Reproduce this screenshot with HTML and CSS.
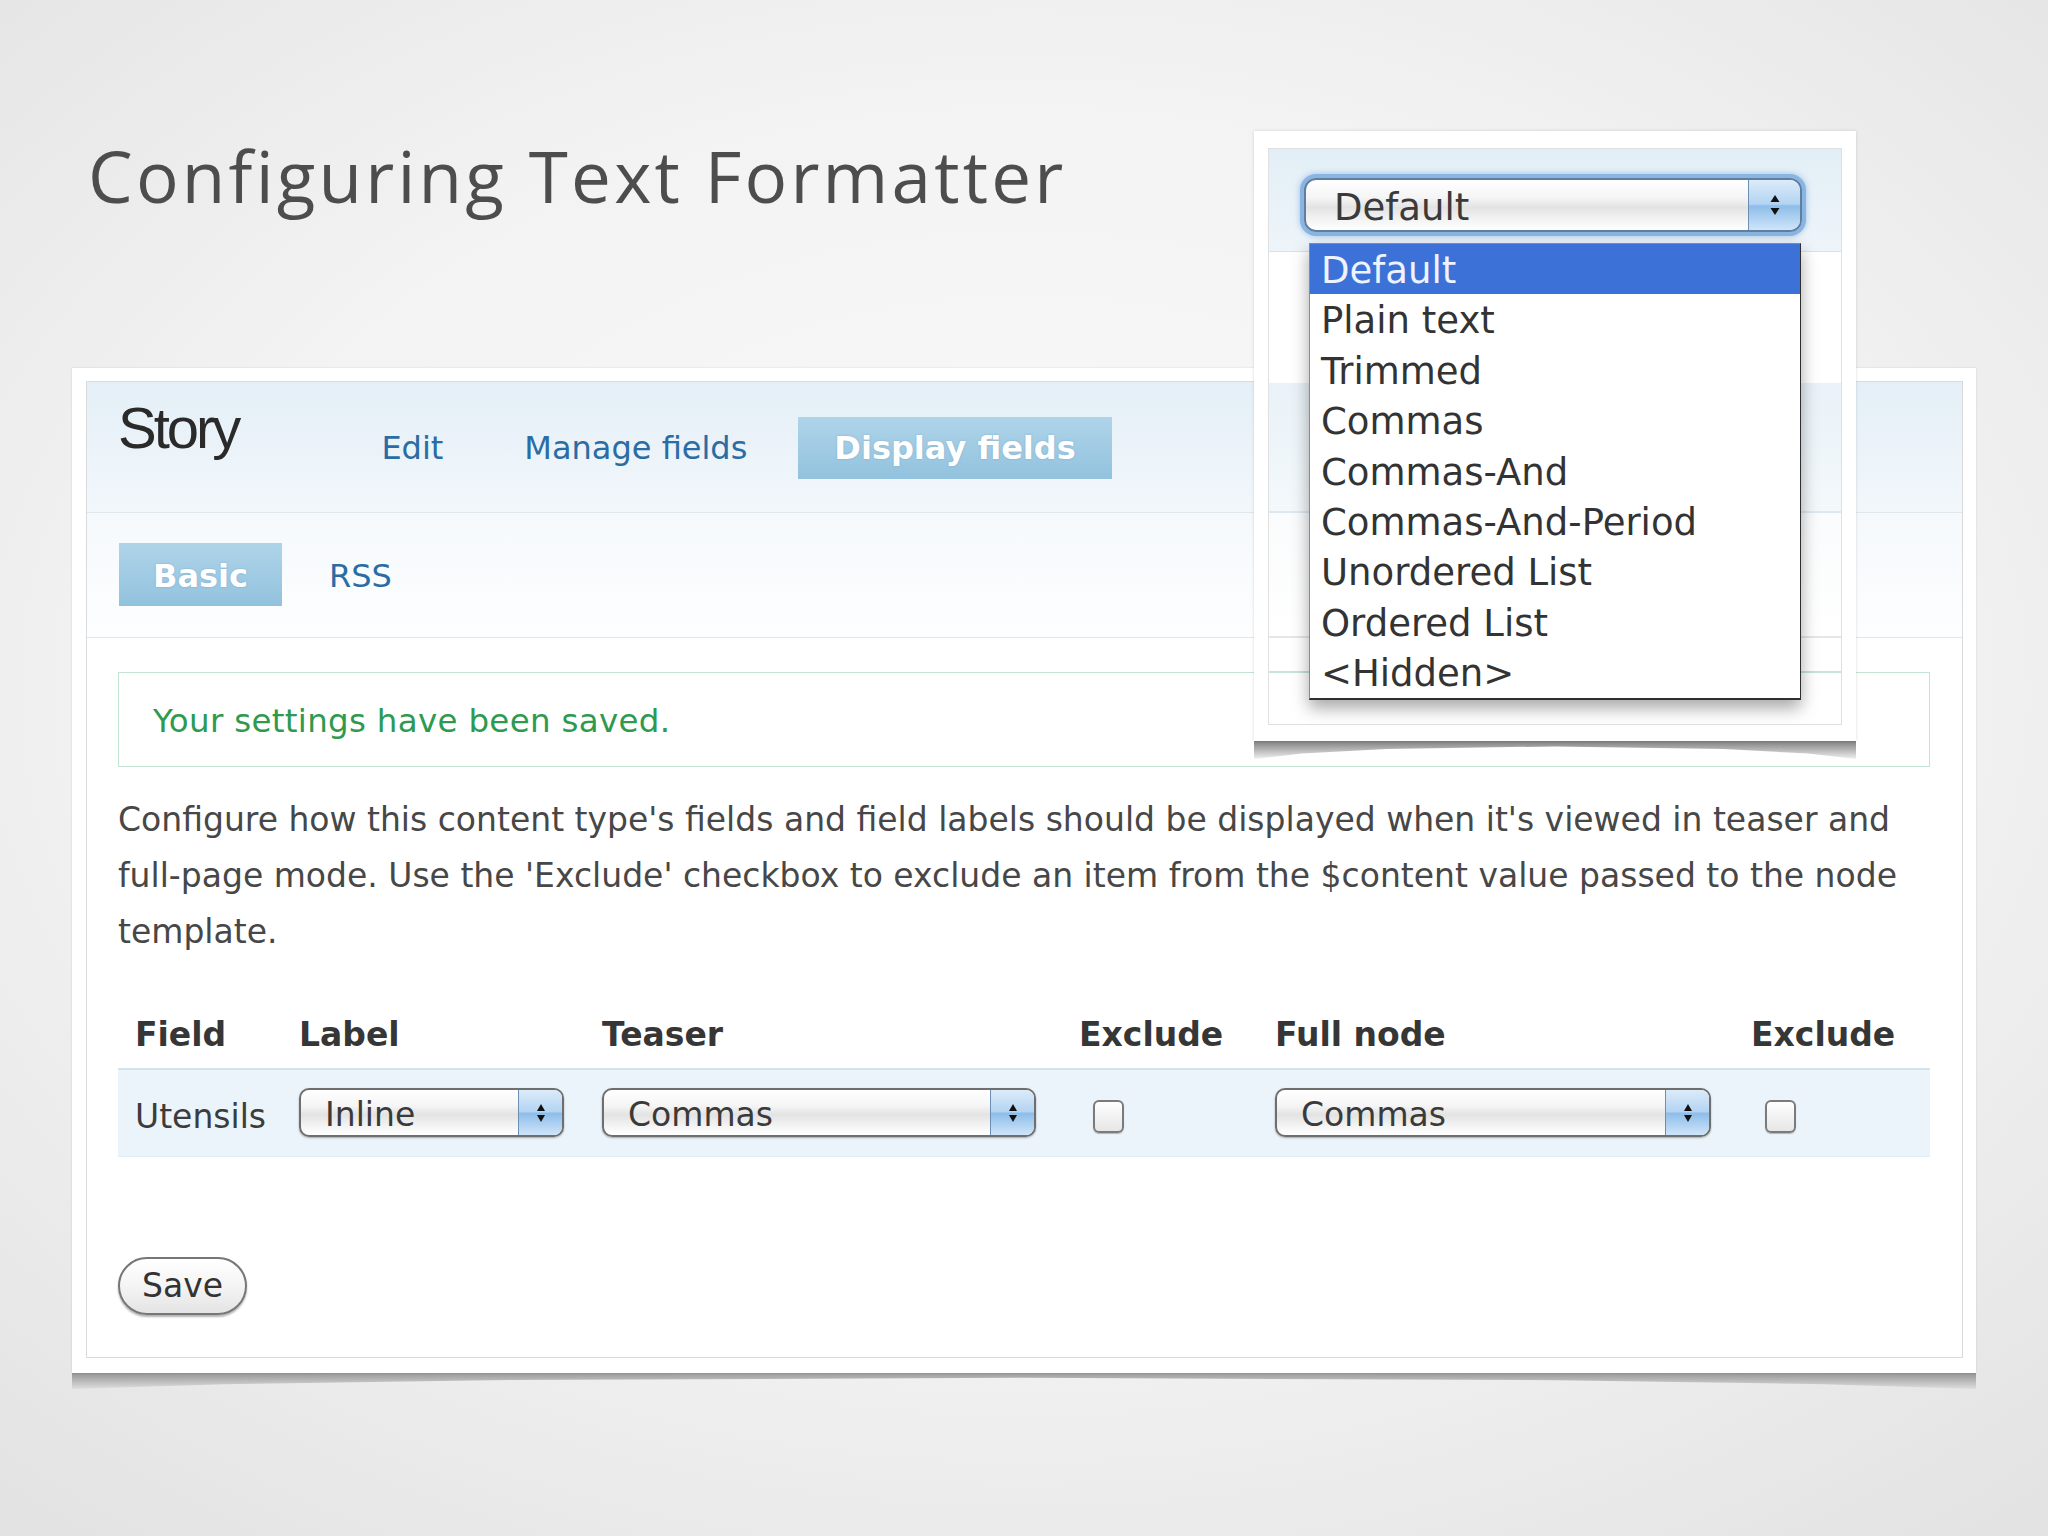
FILE: index.html
```html
<!DOCTYPE html>
<html><head><meta charset="UTF-8">
  <title>Configuring Text Formatter</title>
  <link rel="stylesheet" href="styles.css">
</head>
<body>
<div class="slide">
  <h1 class="title">Configuring Text Formatter</h1>

  <div class="card">
    <div class="page">
      <div class="head">
        <h2 class="type">Story</h2>
        <ul class="tabs primary">
          <li>Edit</li>
          <li>Manage fields</li>
          <li class="on">Display fields</li>
        </ul>
      </div>
      <div class="subhead">
        <ul class="tabs">
          <li class="on">Basic</li>
          <li>RSS</li>
        </ul>
      </div>
      <div class="content">
        <div class="msg">Your settings have been saved.</div>
        <p class="desc">Configure how this content type's fields and field labels should be displayed when it's viewed in teaser and full-page mode. Use the 'Exclude' checkbox to exclude an item from the $content value passed to the node template.</p>
        <table class="fields">
          <colgroup><col class="c1"><col class="c2"><col class="c3"><col class="c4"><col class="c5"><col class="c6"></colgroup>
          <thead>
            <tr><th>Field</th><th>Label</th><th>Teaser</th><th>Exclude</th><th>Full node</th><th>Exclude</th></tr>
          </thead>
          <tbody>
            <tr>
              <td>Utensils</td>
              <td><span class="select w-label"><span class="val">Inline</span><span class="arr"><svg width="12" height="24" viewBox="0 0 12 24"><polygon points="6,3 10,10 2,10"/><polygon points="2,14 10,14 6,21"/></svg></span></span></td>
              <td><span class="select w-teaser"><span class="val">Commas</span><span class="arr"><svg width="12" height="24" viewBox="0 0 12 24"><polygon points="6,3 10,10 2,10"/><polygon points="2,14 10,14 6,21"/></svg></span></span></td>
              <td><span class="check"></span></td>
              <td><span class="select w-full"><span class="val">Commas</span><span class="arr"><svg width="12" height="24" viewBox="0 0 12 24"><polygon points="6,3 10,10 2,10"/><polygon points="2,14 10,14 6,21"/></svg></span></span></td>
              <td><span class="check"></span></td>
            </tr>
          </tbody>
        </table>
        <button class="btn">Save</button>
      </div>
    </div>
  </div>

  <div class="popup">
    <div class="shot">
      <div class="band">
        <span class="select focus"><span class="val">Default</span><span class="arr"><svg width="14" height="28" viewBox="0 0 14 28"><polygon points="7,4 11.5,11 2.5,11"/><polygon points="2.5,17 11.5,17 7,24"/></svg></span></span>
      </div>
    </div>
    <ul class="options">
      <li class="on">Default</li>
      <li>Plain text</li>
      <li>Trimmed</li>
      <li>Commas</li>
      <li>Commas-And</li>
      <li>Commas-And-Period</li>
      <li>Unordered List</li>
      <li>Ordered List</li>
      <li>&lt;Hidden&gt;</li>
    </ul>
  </div>
</div>
</body></html>
```

FILE: styles.css
```css
*{margin:0;padding:0;box-sizing:border-box;}
body{font-family:"DejaVu Sans",sans-serif;color:#444;background:#ececec;}
ul{list-style:none;}

.slide{position:relative;width:2048px;height:1536px;overflow:hidden;padding-top:136px;
  background:radial-gradient(ellipse 75% 70% at 50% 45%,#fafafa 0%,#f3f3f3 55%,#e3e3e3 100%);}

.title{margin-left:88px;height:80px;font-family:"Open Sans",sans-serif;font-weight:400;font-size:71px;line-height:80px;letter-spacing:3.2px;color:#4d4d4d;}

/* main screenshot card */
.card{position:relative;width:1904px;margin:152px 0 0 72px;padding:13px 13px 15px 14px;background:#fff;box-shadow:0 0 2px rgba(0,0,0,.12);}
.card::after,.popup::after{content:'';position:absolute;left:0;right:0;top:100%;height:16px;
  background:linear-gradient(rgba(0,0,0,.36),rgba(0,0,0,.04));
  clip-path:polygon(0 0,100% 0,100% 100%,92% 70%,78% 45%,50% 30%,22% 45%,8% 70%,0 100%);}
.page{height:977px;border:1px solid #dadada;background:#fff;}

.head{display:flex;align-items:flex-start;height:131px;border-bottom:1px solid #dde7ed;
  background:linear-gradient(#e4eff7,#f2f7fb);}
.type{padding:17px 0 0 31px;font-family:"Liberation Sans",Arial,sans-serif;font-weight:normal;font-size:58px;line-height:58px;letter-spacing:-3px;color:#2a2a2a;}
.tabs{display:flex;gap:13px;}
.tabs li{height:62px;padding:0 34px;font-size:32px;line-height:62px;color:#2a6ca4;}
.tabs li.on{background:linear-gradient(#afd4e9,#92c2de);color:#fff;font-weight:bold;text-shadow:0 0 2px rgba(60,110,150,.35);}
.primary{margin:35px 0 0 109px;}
.primary li.on{margin-left:4px;padding:0 36px;}
.subhead{height:125px;padding:30px 0 0 32px;border-bottom:1px solid #e6e6e6;background:linear-gradient(#f5f9fc,#fdfeff);}
.subhead .tabs li{height:63px;line-height:66px;}

.content{padding:34px 32px 0 31px;}
.msg{display:flex;align-items:center;height:95px;padding:2px 34px 0;border:1px solid #c3e4d3;font-size:32.5px;line-height:40px;letter-spacing:.3px;color:#2e9a4f;}
.desc{margin-top:25px;font-size:33px;line-height:56px;color:#474747;}

.fields{width:1812px;table-layout:fixed;border-collapse:collapse;font-size:33px;}
.c1{width:164px;}.c2{width:303px;}.c3{width:477px;}.c4{width:196px;}.c5{width:476px;}.c6{width:196px;}
.fields th{padding:55px 0 13px 17px;text-align:left;font-weight:bold;line-height:40px;color:#363636;}
.fields td{height:87px;padding:4px 0 0 17px;vertical-align:middle;line-height:40px;color:#3c3c3c;
  background:#eaf4fa;border-top:2px solid #d3e3ee;border-bottom:1px solid #e2edf4;}
.fields td:first-child{padding-top:8px;}

.select{display:flex;height:49px;margin-top:-4px;border:2px solid #6e6e6e;border-radius:10px;overflow:hidden;
  background:linear-gradient(#fff 0%,#f5f5f5 35%,#e3e3e3 55%,#f4f4f4 80%,#fff 100%);box-shadow:0 1px 2px rgba(0,0,0,.3);}
.select .val{flex:1;padding:2px 0 0 24px;font-size:33px;line-height:45px;color:#3a3a3a;}
.select .arr{display:flex;align-items:center;justify-content:center;width:44px;border-left:1px solid #6d8fb3;
  background:linear-gradient(#dcebfa 0%,#b3d4f2 48%,#8dbde9 52%,#cfe5f9 100%);}
.select .arr svg{fill:#111;}
.w-label{width:265px;}
.w-teaser{width:434px;}
.w-full{width:436px;}
.check{display:block;width:31px;height:33px;margin:4px 0 0 14px;border:2px solid #7b7b7b;border-radius:6px;
  background:linear-gradient(#fff,#e6e6e6);box-shadow:0 1px 1px rgba(0,0,0,.25);}

.btn{display:block;width:129px;height:58px;margin-top:100px;border:2px solid #767676;border-radius:29px;
  background:linear-gradient(#fff 0%,#f4f4f4 50%,#e4e4e4 100%);box-shadow:0 2px 2px rgba(0,0,0,.3);
  font-family:"DejaVu Sans",sans-serif;font-size:33px;color:#333;}

/* enlarged dropdown callout */
.popup{position:absolute;left:1254px;top:131px;width:602px;height:610px;padding:17px 14px 16px 14px;background:#fff;box-shadow:0 0 3px rgba(0,0,0,.15);}
.popup::after{height:18px;background:linear-gradient(rgba(0,0,0,.5),rgba(0,0,0,.06));}
.shot{height:577px;border:1px solid #e0e0e0;
  background:linear-gradient(#fff 0px,#fff 234px,#e9f2f8 234px,#f3f8fb 362px,#dfe8ee 362px,#dfe8ee 364px,#fafbfc 364px,#fff 487px,#e6e6e6 487px,#e6e6e6 489px,#fff 489px,#fff 522px,#c6e5d6 522px,#c6e5d6 524px,#fff 524px);}
.band{height:103px;padding:29px 0 0 35px;border-bottom:1px solid #d6e4ec;background:linear-gradient(#e2eef6,#eef5fa);}
.select.focus{width:498px;height:54px;margin-top:0;border-radius:12px;border-color:#5f7f9f;box-shadow:0 0 0 4px #8ab5e2,0 0 6px 4px rgba(110,160,215,.6);}
.select.focus .val{padding:3px 0 0 28px;font-size:37px;line-height:50px;}
.select.focus .arr{width:52px;}
.options{position:absolute;left:55px;top:112px;width:492px;background:#fff;border:1px solid #8a8a8a;border-right-color:#2f2f2f;border-bottom:2px solid #2f2f2f;
  box-shadow:0 8px 16px rgba(0,0,0,.35);}
.options li{height:50.4px;padding:3px 0 0 11px;font-size:37px;line-height:48px;color:#333;}
.options li.on{background:#3c72d7;color:#eef3ff;}
```
